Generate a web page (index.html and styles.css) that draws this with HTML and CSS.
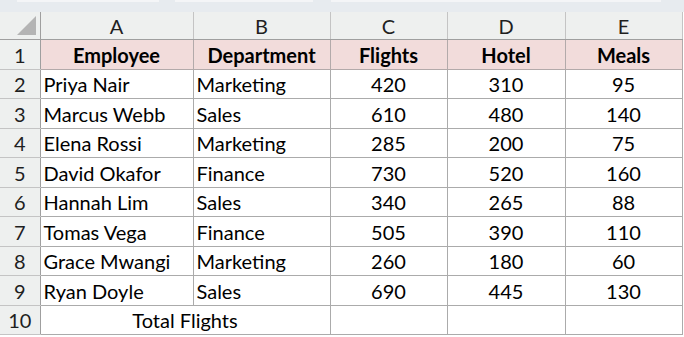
FILE: index.html
```html
<!DOCTYPE html>
<html>
<head>
<meta charset="utf-8">
<link rel="stylesheet" href="styles.css">
</head>
<body>
<div class="band">
  <div class="tab t1"></div>
  <div class="tab t2"></div>
  <div class="tab t3"></div>
</div>
<table class="sheet">
  <colgroup>
    <col class="c-rh"><col class="c-a"><col class="c-b"><col class="c-c"><col class="c-d"><col class="c-e">
  </colgroup>
  <tr class="colhead">
    <th class="corner"><span class="tri"></span></th>
    <th>A</th><th>B</th><th>C</th><th>D</th><th>E</th>
  </tr>
  <tr class="r odd head">
    <th class="rn">1</th>
    <td class="ctr">Employee</td><td class="ctr">Department</td><td class="ctr">Flights</td><td class="ctr">Hotel</td><td class="ctr">Meals</td>
  </tr>
  <tr class="r even"><th class="rn">2</th><td>Priya Nair</td><td>Marketing</td><td class="ctr">420</td><td class="ctr">310</td><td class="ctr">95</td></tr>
  <tr class="r odd"><th class="rn">3</th><td>Marcus Webb</td><td>Sales</td><td class="ctr">610</td><td class="ctr">480</td><td class="ctr">140</td></tr>
  <tr class="r even"><th class="rn">4</th><td>Elena Rossi</td><td>Marketing</td><td class="ctr">285</td><td class="ctr">200</td><td class="ctr">75</td></tr>
  <tr class="r odd"><th class="rn">5</th><td>David Okafor</td><td>Finance</td><td class="ctr">730</td><td class="ctr">520</td><td class="ctr">160</td></tr>
  <tr class="r even"><th class="rn">6</th><td>Hannah Lim</td><td>Sales</td><td class="ctr">340</td><td class="ctr">265</td><td class="ctr">88</td></tr>
  <tr class="r odd"><th class="rn">7</th><td>Tomas Vega</td><td>Finance</td><td class="ctr">505</td><td class="ctr">390</td><td class="ctr">110</td></tr>
  <tr class="r even"><th class="rn">8</th><td>Grace Mwangi</td><td>Marketing</td><td class="ctr">260</td><td class="ctr">180</td><td class="ctr">60</td></tr>
  <tr class="r odd"><th class="rn">9</th><td>Ryan Doyle</td><td>Sales</td><td class="ctr">690</td><td class="ctr">445</td><td class="ctr">130</td></tr>
  <tr class="r even last"><th class="rn">10</th><td class="ctr" colspan="2">Total Flights</td><td></td><td></td><td></td></tr>
</table>
</body>
</html>
```
FILE: styles.css
```css
html, body {
  margin: 0;
  padding: 0;
  background: #ffffff;
  width: 684px;
  height: 337px;
  overflow: hidden;
}
body {
  font-family: Lato, "Liberation Sans", sans-serif;
  color: #000;
}
.band {
  height: 12px;
  background: #e7ebef;
  display: flex;
  gap: 18px;
  padding-left: 17px;
}
.tab {
  height: 2px;
  background: #f4f5f7;
}
.t1 { width: 142px; }
.t2 { width: 138px; margin-left: -2px; }
.t3 { width: 330px; }
.sheet {
  border-collapse: collapse;
  table-layout: fixed;
  width: 682px;
  font-size: 20px;
}
.c-rh { width: 40px; }
.c-a { width: 153px; }
.c-b { width: 137px; }
.c-c { width: 117px; }
.c-d { width: 118px; }
.c-e { width: 117px; }
.colhead th {
  height: 27px;
  padding: 0;
  background: #eef0ef;
  font-weight: normal;
  color: #1f1f1f;
  border-left: 1px solid #c4c4c4;
  border-right: 1px solid #c4c4c4;
  border-bottom: 1px solid #9f9f9f;
  text-align: center;
  vertical-align: middle;
  line-height: 20px;
}
.colhead th.corner {
  position: relative;
  border-left: none;
  border-right: 1px solid #9f9f9f;
}
.tri {
  position: absolute;
  right: 4px;
  bottom: 4px;
  width: 0;
  height: 0;
  border-left: 19px solid transparent;
  border-bottom: 19px solid #b4b4b4;
}
.r th.rn {
  padding: 0;
  background: #eef0ef;
  font-weight: normal;
  color: #1f1f1f;
  text-align: center;
  border-right: 1px solid #9f9f9f;
  border-bottom: 1px solid #c4c4c4;
}
.r.odd { height: 30px; }
.r.even { height: 29px; }
.r td {
  padding: 0 3px;
  border: 1px solid #ababab;
  white-space: nowrap;
  overflow: hidden;
  vertical-align: middle;
  line-height: 20px;
}
.r td.ctr { text-align: center; }
.head td {
  background: #f2dcdb;
  font-weight: 700;
  border-color: #b3aaaa;
}
.last th.rn { border-bottom: 1px solid #c4c4c4; }
.last td { height: 27px; }
```
